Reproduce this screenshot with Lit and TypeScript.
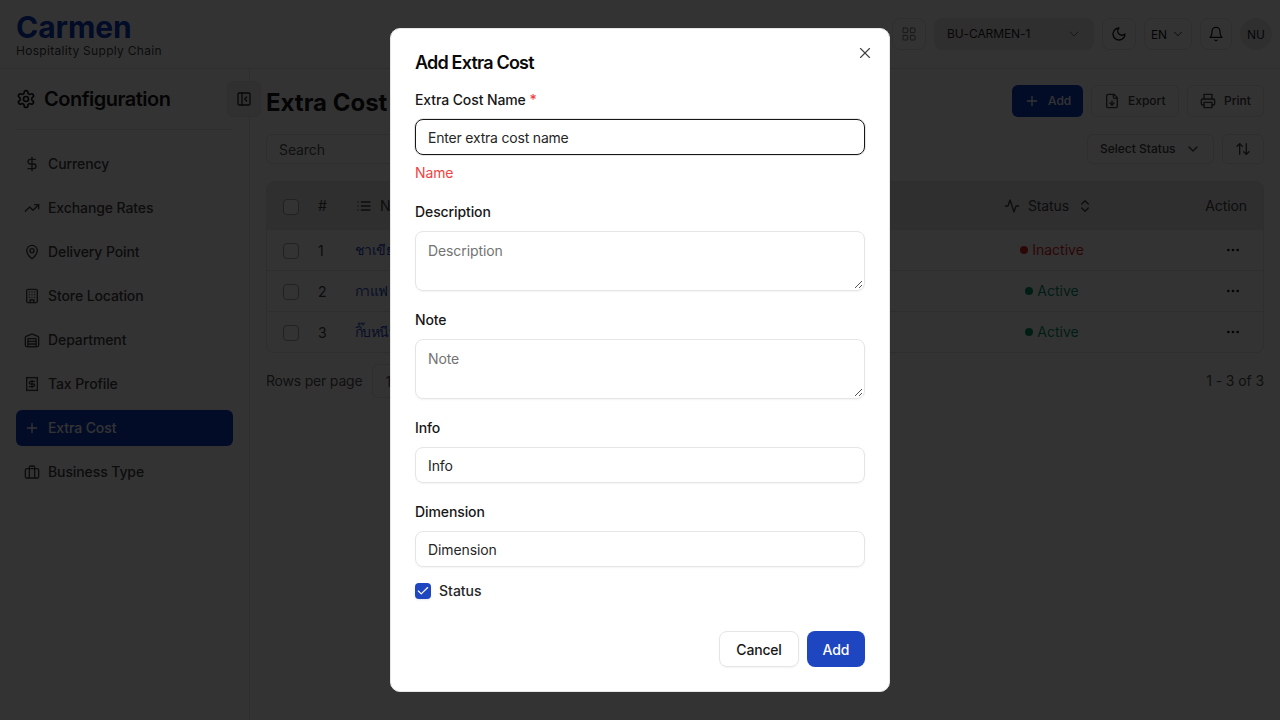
import { LitElement, html, css, svg } from "lit";
import { customElement } from "lit/decorators.js";

const ic = (body: unknown, size = 16, sw = 2, cls = "") =>
  html`<svg class=${cls} width=${size} height=${size} viewBox="0 0 24 24" fill="none" stroke="currentColor" stroke-width=${sw} stroke-linecap="round" stroke-linejoin="round">${body}</svg>`;

const I = {
  gear: svg`<path d="M12.22 2h-.44a2 2 0 0 0-2 2v.18a2 2 0 0 1-1 1.73l-.43.25a2 2 0 0 1-2 0l-.15-.08a2 2 0 0 0-2.73.73l-.22.38a2 2 0 0 0 .73 2.73l.15.1a2 2 0 0 1 1 1.72v.51a2 2 0 0 1-1 1.74l-.15.09a2 2 0 0 0-.73 2.73l.22.38a2 2 0 0 0 2.73.73l.15-.08a2 2 0 0 1 2 0l.43.25a2 2 0 0 1 1 1.73V20a2 2 0 0 0 2 2h.44a2 2 0 0 0 2-2v-.18a2 2 0 0 1 1-1.73l.43-.25a2 2 0 0 1 2 0l.15.08a2 2 0 0 0 2.73-.73l.22-.39a2 2 0 0 0-.73-2.73l-.15-.08a2 2 0 0 1-1-1.74v-.5a2 2 0 0 1 1-1.74l.15-.09a2 2 0 0 0 .73-2.73l-.22-.38a2 2 0 0 0-2.73-.73l-.15.08a2 2 0 0 1-2 0l-.43-.25a2 2 0 0 1-1-1.73V4a2 2 0 0 0-2-2z"/><circle cx="12" cy="12" r="3"/>`,
  dollar: svg`<line x1="12" x2="12" y1="2" y2="22"/><path d="M17 5H9.5a3.5 3.5 0 0 0 0 7h5a3.5 3.5 0 0 1 0 7H6"/>`,
  trend: svg`<path d="m22 7-8.5 8.5-5-5L2 17"/><path d="M16 7h6v6"/>`,
  pin: svg`<path d="M20 10c0 6-8 12-8 12s-8-6-8-12a8 8 0 0 1 16 0Z"/><circle cx="12" cy="10" r="3"/>`,
  building: svg`<rect x="4" y="2" width="16" height="20" rx="2"/><path d="M9 22v-4h6v4"/><path d="M8 6h.01M16 6h.01M12 6h.01M12 10h.01M12 14h.01M16 10h.01M16 14h.01M8 10h.01M8 14h.01"/>`,
  warehouse: svg`<path d="M22 8.35V20a2 2 0 0 1-2 2H4a2 2 0 0 1-2-2V8.35A2 2 0 0 1 3.26 6.5l8-3.2a2 2 0 0 1 1.48 0l8 3.2A2 2 0 0 1 22 8.35Z"/><path d="M6 18h12M6 14h12"/><rect x="6" y="10" width="12" height="12"/>`,
  receipt: svg`<path d="M4 2v20l2-1 2 1 2-1 2 1 2-1 2 1 2-1 2 1V2l-2 1-2-1-2 1-2-1-2 1-2-1-2 1Z"/><path d="M16 8h-6a2 2 0 1 0 0 4h4a2 2 0 1 1 0 4H8"/><path d="M12 17.5v-11"/>`,
  plus: svg`<path d="M5 12h14M12 5v14"/>`,
  brief: svg`<rect x="2" y="7" width="20" height="14" rx="2"/><path d="M16 21V5a2 2 0 0 0-2-2h-4a2 2 0 0 0-2 2v16"/>`,
  panel: svg`<rect x="3" y="3" width="18" height="18" rx="2"/><path d="M9 3v18"/><path d="m16 15-3-3 3-3"/>`,
  grid: svg`<rect x="3" y="3" width="7" height="7" rx="1"/><rect x="14" y="3" width="7" height="7" rx="1"/><rect x="14" y="14" width="7" height="7" rx="1"/><rect x="3" y="14" width="7" height="7" rx="1"/>`,
  chev: svg`<path d="m6 9 6 6 6-6"/>`,
  moon: svg`<path d="M12 3a6 6 0 0 0 9 9 9 9 0 1 1-9-9Z"/>`,
  bell: svg`<path d="M6 8a6 6 0 0 1 12 0c0 7 3 9 3 9H3s3-2 3-9"/><path d="M10.3 21a1.94 1.94 0 0 0 3.4 0"/>`,
  file: svg`<path d="M15 2H6a2 2 0 0 0-2 2v16a2 2 0 0 0 2 2h12a2 2 0 0 0 2-2V7Z"/><path d="M14 2v4a2 2 0 0 0 2 2h4"/><path d="M12 18v-6"/><path d="m9 15 3 3 3-3"/>`,
  printer: svg`<path d="M6 9V2h12v7"/><path d="M6 18H4a2 2 0 0 1-2-2v-5a2 2 0 0 1 2-2h16a2 2 0 0 1 2 2v5a2 2 0 0 1-2 2h-2"/><rect x="6" y="14" width="12" height="8"/>`,
  sort: svg`<path d="m21 16-4 4-4-4"/><path d="M17 20V4"/><path d="m3 8 4-4 4 4"/><path d="M7 4v16"/>`,
  list: svg`<path d="M3 12h.01M3 18h.01M3 6h.01M8 12h13M8 18h13M8 6h13"/>`,
  activity: svg`<path d="M22 12h-4l-3 9L9 3l-3 9H2"/>`,
  updown: svg`<path d="m7 15 5 5 5-5"/><path d="m7 9 5-5 5 5"/>`,
  dots: svg`<circle cx="12" cy="12" r="1"/><circle cx="19" cy="12" r="1"/><circle cx="5" cy="12" r="1"/>`,
  x: svg`<path d="M18 6 6 18"/><path d="m6 6 12 12"/>`,
  check: svg`<path d="M20 6 9 17l-5-5"/>`,
};

const NAV: [string, unknown, boolean?][] = [
  ["Currency", I.dollar],
  ["Exchange Rates", I.trend],
  ["Delivery Point", I.pin],
  ["Store Location", I.building],
  ["Department", I.warehouse],
  ["Tax Profile", I.receipt],
  ["Extra Cost", I.plus, true],
  ["Business Type", I.brief],
];

const ROWS: [string, string, boolean][] = [
  ["1", "ชาเขียว", false],
  ["2", "กาแฟ", true],
  ["3", "กิ๊บหนีบ", true],
];

@customElement("app-root")
export class AppRoot extends LitElement {
  static styles = css`
    :host { display: block; width: 1280px; height: 720px; position: relative; overflow: hidden; background: #fff;
      font-family: Inter, "Noto Sans", sans-serif; color: #0a0a0a; font-size: 14px; letter-spacing: -0.1px; }
    * { box-sizing: border-box; }
    svg { display: block; flex: none; }
    .page { display: flex; flex-direction: column; height: 720px; }

    .top { height: 69px; flex: none; border-bottom: 1px solid #e5e5e5; display: flex; align-items: center; justify-content: space-between; padding: 0 8px 0 16px; }
    .brand { display: flex; flex-direction: column; margin-top: 2px; }
    .brand b { font-size: 30px; line-height: 32px; font-weight: 700; color: #0a3cc4; letter-spacing: -0.05px; }
    .brand span { font-size: 12px; line-height: 16px; letter-spacing: 0.3px; color: #404040; }
    .tools { display: flex; align-items: center; gap: 8px; }
    .tbtn { height: 32px; border: 1px solid #e5e5e5; border-radius: 8px; display: flex; align-items: center; justify-content: center; gap: 4px; font-size: 12px; color: #171717; }
    .tbtn.grid { width: 34px; color: #737373; }
    .tbtn.moon { width: 34px; }
    .tbtn.lang { width: 48px; }
    .tbtn.bell { width: 32px; }
    .bu { width: 160px; height: 32px; background: #e8e8e8; border-radius: 8px; display: flex; align-items: center; justify-content: space-between; padding: 0 12px 0 13px; font-size: 12px; color: #262626; }
    .bu span { margin-top: -2px; }
    .bu svg { color: #737373; }
    .nu { width: 32px; height: 32px; border-radius: 50%; background: #e8e8e8; display: flex; align-items: center; justify-content: center; font-size: 12px; color: #262626; }

    .body { flex: 1; display: flex; min-height: 0; position: relative; }
    .side { width: 250px; flex: none; border-right: 1px solid #e5e5e5; padding: 0 16px; }
    .side-h { height: 61px; border-bottom: 1px solid #e5e5e5; display: flex; align-items: center; gap: 8px; font-size: 20px; font-weight: 600; letter-spacing: -0.5px; color: #171717; }
    .nav { display: flex; flex-direction: column; gap: 8px; margin-top: 16px; }
    .item { height: 36px; border-radius: 6px; display: flex; align-items: center; gap: 8px; padding: 0 8px; color: #404040; font-weight: 500; }
    .item span { margin-top: -2px; }
    .item.on { background: #0a3cc4; color: #fff; }
    .toggle { position: absolute; left: 227px; top: 12px; width: 34px; height: 36px; border: 1px solid #e5e5e5; border-radius: 6px; background: #f0f0f0; display: flex; align-items: center; justify-content: center; color: #262626; }

    .main { flex: 1; padding: 15px 16px 0; min-width: 0; }
    .head { display: flex; justify-content: space-between; align-items: center; height: 33px; }
    .head h1 { margin: 4px 0 0; font-size: 24px; font-weight: 700; letter-spacing: 0; color: #171717; line-height: 32px; }
    .acts { display: flex; gap: 8px; }
    .btn { height: 32px; border-radius: 6px; border: 1px solid #e5e5e5; display: flex; align-items: center; gap: 8px; padding: 0 12px; font-size: 12px; font-weight: 500; letter-spacing: 0; color: #404040; }
    .btn.pri { width: 71px; background: #0a3cc4; border: 0; color: #fff; }
    .btn.exp { width: 88px; }
    .btn.prt { width: 77px; }
    .filters { display: flex; justify-content: space-between; align-items: center; margin-top: 16px; height: 31px; }
    .search { width: 320px; height: 30px; border: 1px solid #e5e5e5; border-radius: 6px; padding: 2px 12px 0; display: flex; align-items: center; color: #525252; }
    .fr { display: flex; gap: 8px; }
    .fbtn { height: 30px; border: 1px solid #e5e5e5; border-radius: 6px; display: flex; align-items: center; justify-content: space-between; font-size: 12px; font-weight: 500; letter-spacing: 0; color: #404040; }
    .status-filter { width: 127px; padding: 0 12px; }
    .sort-btn { width: 42px; justify-content: center; }

    .table { margin-top: 17px; border: 1px solid #e5e5e5; border-radius: 8px; overflow: hidden; }
    .row { display: grid; grid-template-columns: 35px 38px 1fr 130px 130px; padding: 0 16px; height: 41px; align-items: center; border-top: 1px solid #e5e5e5; color: #404040; }
    .row.hd { height: 47px; border-top: 0; background: #ebebeb; color: #404040; }
    .cb { width: 16px; height: 16px; border: 1px solid #a3a3a3; border-radius: 4px; background: #fff; margin-top: 2px; }
    .nm { display: flex; gap: 8px; align-items: center; }
    .lnk { color: #1e46c0; font-family: "Noto Sans", Inter, sans-serif; margin-left: -1px; letter-spacing: -0.6px; }
    .st { display: flex; align-items: center; justify-content: center; gap: 4px; letter-spacing: 0; }
    .st span:last-child { margin-top: -2px; }
    .st.h { gap: 8px; padding: 0 7px 0 0; letter-spacing: -0.1px; }
    .dot { width: 8px; height: 8px; border-radius: 50%; background: currentColor; }
    .st span.dot { margin-top: 0; }
    .off { color: #dc2626; }
    .onn { color: #059669; }
    .ac { text-align: right; }
    .ac svg { margin-left: auto; margin-right: 6px; color: #171717; }
    .pg { display: flex; justify-content: space-between; align-items: center; margin-top: 11px; height: 34px; color: #525252; }
    .pl { display: flex; align-items: center; gap: 10px; letter-spacing: -0.2px; }
    .pg span, .total { margin-top: -2px; }
    .sel { width: 70px; height: 34px; border: 1px solid #e5e5e5; border-radius: 6px; padding: 0 12px; display: flex; align-items: center; }

    .scrim { position: absolute; inset: 0; background: rgba(0,0,0,.8); }
    .dlg { position: absolute; left: 390px; top: 28px; width: 500px; height: 664px; background: #fff; border: 1px solid #e5e5e5; border-radius: 10px; padding: 24px; display: flex; flex-direction: column; }
    .close { position: absolute; right: 15px; top: 15px; color: #404040; }
    h2 { margin: 1px 0 0; font-size: 18px; line-height: 18px; font-weight: 600; color: #0a0a0a; letter-spacing: -0.8px; }
    label { display: block; font-size: 14px; line-height: 14px; font-weight: 500; color: #171717; margin-bottom: 4px; }
    .req { color: #ef4444; }
    .f { display: flex; flex-direction: column; gap: 8px; margin-top: 22px; }
    .f.first { margin-top: 21px; }
    .inp { height: 36px; border: 1px solid #e5e5e5; border-radius: 8px; padding: 0 12px; display: flex; align-items: center; color: #262626; box-shadow: 0 1px 2px rgba(0,0,0,.05); }
    .inp.focus { border-color: #171717; box-shadow: 0 0 0 1px #e5e5e5; letter-spacing: -0.2px; }
    .ta { height: 60px; border: 1px solid #e5e5e5; border-radius: 8px; padding: 10px 12px; color: #737373; line-height: 17px; position: relative; box-shadow: 0 1px 2px rgba(0,0,0,.05); }
    .grip { position: absolute; right: 1px; bottom: 1px; }
    .err { color: #ef4444; margin-top: 8px; line-height: 20px; }
    .chk { display: flex; align-items: center; gap: 8px; font-weight: 500; letter-spacing: 0; color: #262626; margin-top: 15px; }
    .box { width: 16px; height: 16px; border-radius: 4px; background: #1e46c0; color: #fff; display: flex; align-items: center; justify-content: center; box-shadow: 0 1px 2px rgba(0,0,0,.1); }
    .foot { display: flex; justify-content: flex-end; gap: 8px; margin-top: auto; }
    .b { height: 36px; border-radius: 8px; display: flex; align-items: center; justify-content: center; font-weight: 500; }
    .cancel { width: 80px; border: 1px solid #e5e5e5; color: #171717; letter-spacing: -0.2px; box-shadow: 0 1px 2px rgba(0,0,0,.05); }
    .add { width: 58px; background: #1e46c0; color: #fff; }
  `;

  private grip() {
    return html`<svg class="grip" width="9" height="9" viewBox="0 0 9 9" stroke="#555" fill="none"><path d="M8 1 1 8M8 5 5 8"/></svg>`;
  }

  render() {
    return html`
      <div class="page">
        <header class="top">
          <div class="brand"><b>Carmen</b><span>Hospitality Supply Chain</span></div>
          <div class="tools">
            <div class="tbtn grid">${ic(I.grid, 16, 1.5)}</div>
            <div class="bu"><span>BU-CARMEN-1</span>${ic(I.chev, 16, 1.5)}</div>
            <div class="tbtn moon">${ic(I.moon, 16, 2)}</div>
            <div class="tbtn lang">EN${ic(I.chev, 14, 1.5)}</div>
            <div class="tbtn bell">${ic(I.bell, 16, 1.75)}</div>
            <div class="nu">NU</div>
          </div>
        </header>
        <div class="body">
          <aside class="side">
            <div class="side-h">${ic(I.gear, 20, 2)}<span>Configuration</span></div>
            <nav class="nav">
              ${NAV.map(([t, i, on]) => html`<div class="item ${on ? "on" : ""}">${ic(i, 16, 2)}<span>${t}</span></div>`)}
            </nav>
          </aside>
          <div class="toggle">${ic(I.panel, 16, 2)}</div>
          <main class="main">
            <div class="head">
              <h1>Extra Cost</h1>
              <div class="acts">
                <div class="btn pri">${ic(I.plus, 16, 2)}Add</div>
                <div class="btn exp">${ic(I.file, 16, 2)}Export</div>
                <div class="btn prt">${ic(I.printer, 16, 2)}Print</div>
              </div>
            </div>
            <div class="filters">
              <div class="search">Search</div>
              <div class="fr">
                <div class="fbtn status-filter">Select Status${ic(I.chev, 16, 2)}</div>
                <div class="fbtn sort-btn">${ic(I.sort, 16, 2)}</div>
              </div>
            </div>
            <div class="table">
              <div class="row hd">
                <div class="cb"></div><div>#</div>
                <div class="nm">${ic(I.list, 16, 2)}<span>Name</span></div>
                <div class="st h">${ic(I.activity, 16, 2)}<span>Status</span>${ic(I.updown, 16, 2)}</div>
                <div class="ac">Action</div>
              </div>
              ${ROWS.map(([n, t, act]) => html`<div class="row">
                <div class="cb"></div><div>${n}</div>
                <div class="lnk">${t}</div>
                <div class="st ${act ? "onn" : "off"}"><span class="dot"></span><span>${act ? "Active" : "Inactive"}</span></div>
                <div class="ac">${ic(I.dots, 16, 2)}</div>
              </div>`)}
            </div>
            <div class="pg">
              <div class="pl"><span>Rows per page</span><div class="sel">10</div></div>
              <div class="total">1 - 3 of 3</div>
            </div>
          </main>
        </div>
      </div>
      <div class="scrim"></div>
      <div class="dlg">
        <div class="close">${ic(I.x, 18, 1.5)}</div>
        <h2>Add Extra Cost</h2>
        <div class="f first">
          <label>Extra Cost Name <span class="req">*</span></label>
          <div class="inp focus">Enter extra cost name</div>
        </div>
        <div class="err">Name</div>
        <div class="f"><label>Description</label><div class="ta">Description${this.grip()}</div></div>
        <div class="f"><label>Note</label><div class="ta">Note${this.grip()}</div></div>
        <div class="f"><label>Info</label><div class="inp">Info</div></div>
        <div class="f"><label>Dimension</label><div class="inp">Dimension</div></div>
        <div class="chk"><span class="box">${ic(I.check, 14, 2)}</span>Status</div>
        <div class="foot"><div class="b cancel">Cancel</div><div class="b add">Add</div></div>
      </div>
    `;
  }
}
